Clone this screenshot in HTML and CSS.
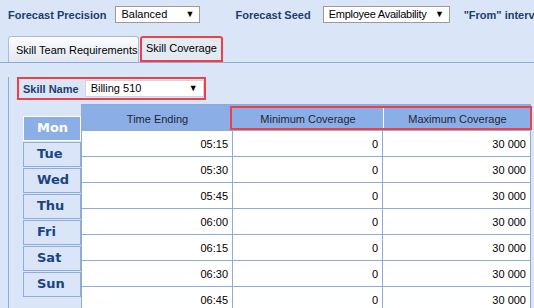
FILE: index.html
```html
<!DOCTYPE html>
<html lang="en">
<head>
    <meta charset="UTF-8">
    <title>Skill Coverage</title>
    <link rel="stylesheet" href="styles.css">
</head>
<body>

    <div class="toolbar">
        <span class="label">Forecast Precision</span>
        <div class="combo precision">Balanced<span class="arrow">&#9660;</span></div>
        <span class="label seed-label">Forecast Seed</span>
        <div class="combo seed">Employee Availability<span class="arrow">&#9660;</span></div>
        <span class="label from-label">"From" interval</span>
    </div>

    <div class="tabs">
        <div class="tab">Skill Team Requirements</div>
        <div class="tab active">Skill Coverage</div>
    </div>

    <div class="panel">
        <div class="skill-row">
            <span class="label">Skill Name</span>
            <div class="combo skill">Billing 510<span class="arrow">&#9660;</span></div>
        </div>

        <div class="content">
            <div class="days">
                <div class="day selected">Mon</div>
                <div class="day">Tue</div>
                <div class="day">Wed</div>
                <div class="day">Thu</div>
                <div class="day">Fri</div>
                <div class="day">Sat</div>
                <div class="day">Sun</div>
            </div>

            <div class="grid">
                <div class="head">
                    <div class="th c1">Time Ending</div>
                    <div class="mark">
                        <div class="th c2">Minimum Coverage</div>
                        <div class="th c3">Maximum Coverage</div>
                    </div>
                </div>
                <div id="rows"></div>
            </div>
        </div>
    </div>

    <script>
        const rows = document.getElementById('rows');
        const times = ['05:15', '05:30', '05:45', '06:00', '06:15', '06:30', '06:45'];

        times.forEach(t => {
            const row = document.createElement('div');
            row.className = 'row';
            row.innerHTML = `<div class="td c1">${t}</div><div class="td c2">0</div><div class="td c3">30 000</div>`;
            rows.appendChild(row);
        });
    </script>

</body>
</html>
```

FILE: styles.css
```css
body {
    margin: 0;
    background: #dae6f8;
    font-family: "Liberation Sans", Arial, sans-serif;
    font-size: 11px;
    color: #000;
    overflow: hidden;
    width: 534px;
    height: 308px;
}
.label {
    font-weight: bold;
    color: #1d3e6c;
    white-space: nowrap;
}
.toolbar {
    display: flex;
    align-items: center;
    height: 17px;
    padding: 6px 0 0 8px;
    white-space: nowrap;
}
.combo {
    position: relative;
    flex: none;
    box-sizing: border-box;
    height: 17px;
    line-height: 15px;
    background: #fff;
    border: 1px solid #9a9a9a;
    padding: 0 16px 0 5px;
    white-space: nowrap;
}
.arrow {
    position: absolute;
    right: 5px;
    top: 0;
    font-size: 9px;
}
.precision { width: 85px; margin-left: 9px; }
.seed-label { margin-left: 35px; }
.seed { width: 127px; margin-left: 12px; letter-spacing: -0.25px; }
.from-label { margin-left: 14px; }

.tabs {
    display: flex;
    margin-top: 13px;
    padding-left: 8px;
    height: 26px;
    border-bottom: 1px solid #8eaad8;
}
.tab {
    box-sizing: border-box;
    height: 26px;
    padding: 7px 0 0 7px;
    width: 131px;
    white-space: nowrap;
    background: linear-gradient(to bottom, #fbfcfe, #e2e8f2);
    border: 1px solid #a9bcd8;
    border-bottom: none;
    border-radius: 3px 3px 0 0;
}
.tab.active {
    width: 83px;
    margin-left: 1px;
    padding-left: 6px;
    padding-top: 6px;
    background: linear-gradient(to bottom, #fdf6da, #e6ebf3 4px, #e2e8f2);
    outline: 2px solid #ef4048;
    outline-offset: -2px;
    border: none;
}

.panel {
    margin-left: 8px;
    border-left: 1px solid #8eaad8;
    height: 245px;
}
.skill-row {
    display: flex;
    align-items: center;
    box-sizing: border-box;
    width: 189px;
    height: 23px;
    margin: 14px 0 0 8px;
    padding-left: 4px;
    border: 2px solid #ef4048;
}
.skill {
    width: 119px;
    margin-left: 6px;
    border-color: #d0d6e0;
}

.content {
    display: flex;
    margin-top: 4px;
    margin-left: 14px;
}
.days {
    margin-top: 12px;
    width: 58px;
}
.day {
    box-sizing: border-box;
    height: 25px;
    margin-bottom: 1px;
    border: 1px solid #90acd8;
    font-family: "DejaVu Sans", Verdana, sans-serif;
    font-weight: bold;
    font-size: 13px;
    color: #1a4482;
    line-height: 22px;
    padding-left: 13px;
}
.day.selected {
    background: #8caee6;
    border-color: #fff;
    color: #fff;
}

.grid {
    border-top: 1px solid #8eaad8;
    border-left: 1px solid #8eaad8;
    background: #fff;
}
.head {
    display: flex;
    background: #8caee6;
    height: 26px;
}
.mark {
    display: flex;
    outline: 2px solid #ef4048;
    outline-offset: -1px;
    margin: 2px 0 0 -2px;
    padding-left: 2px;
    height: 22px;
}
.th {
    box-sizing: border-box;
    text-align: center;
    line-height: 28px;
    color: #1e2636;
}
.mark .th {
    line-height: 24px;
    height: 22px;
}
.mark .c3 { border-left: 1px solid #fff; }
.c1 { width: 151px; }
.c2 { width: 150px; }
.c3 { width: 148px; }
.row {
    display: flex;
    height: 25px;
    border-top: 1px solid #8eaad8;
}
.row:first-child { border-top: none; }
.td {
    box-sizing: border-box;
    text-align: right;
    padding: 7px 4px 0 0;
    border-right: 1px solid #8eaad8;
}
```
